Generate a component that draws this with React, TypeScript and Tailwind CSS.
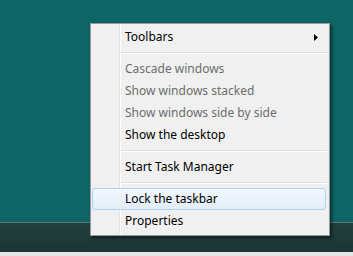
import React from 'react';

type Item = { label: string; disabled?: boolean; sub?: boolean; hover?: boolean } | 'sep';

const items: Item[] = [
  { label: 'Toolbars', sub: true },
  'sep',
  { label: 'Cascade windows', disabled: true },
  { label: 'Show windows stacked', disabled: true },
  { label: 'Show windows side by side', disabled: true },
  { label: 'Show the desktop' },
  'sep',
  { label: 'Start Task Manager' },
  'sep',
  { label: 'Lock the taskbar', hover: true },
  { label: 'Properties' },
];

export default function App() {
  return (
    <div
      className="relative w-[353px] h-[256px] overflow-hidden flex flex-col bg-[#0e6565]"
      style={{ fontFamily: '"Noto Sans", "Open Sans", sans-serif' }}
    >
      {/* desktop */}
      <div className="flex-1" />

      {/* taskbar */}
      <div className="h-[30px] bg-gradient-to-b from-[#22403f] to-[#1b3535] border-t border-[#5d7878]" />
      <div className="h-[4px] bg-[#e4e4e4]" />

      {/* context menu */}
      <div className="absolute left-[90px] top-[23px] w-[240px] bg-[#f0f0f0] border border-[#979797] shadow-[2px_2px_3px_rgba(0,0,0,0.5)] pt-[2px] pb-[3px]">
        <div className="absolute left-[28px] top-[1px] bottom-[1px] w-[2px] border-l border-[#e2e3e3] bg-[#f0f0f0] border-r border-r-white" />
        {items.map((it, i) =>
          it === 'sep' ? (
            <div key={i} className="h-[10px] flex items-center pl-[30px] pr-[2px]">
              <div className="w-full h-[2px] border-t border-[#e0e0e0] border-b border-b-white" />
            </div>
          ) : (
            <div key={i} className="relative h-[22px] px-[1px]">
              {it.hover && (
                <div className="absolute inset-x-[1px] inset-y-0 mr-[2px] rounded-[3px] border border-[#aed4f5] bg-gradient-to-b from-[#f2f7fd] to-[#e2edf9]" />
              )}
              <div
                className={`relative h-full flex items-center pl-[33px] text-[12px] ${
                  it.disabled ? 'text-[#6d6d6d]' : 'text-black'
                }`}
              >
                {it.label}
                {it.sub && (
                  <svg className="absolute left-[222px] top-[8px]" width="4" height="7" viewBox="0 0 4 7">
                    <path d="M0 0 L4 3.5 L0 7 Z" fill="#000" />
                  </svg>
                )}
              </div>
            </div>
          )
        )}
      </div>
    </div>
  );
}
